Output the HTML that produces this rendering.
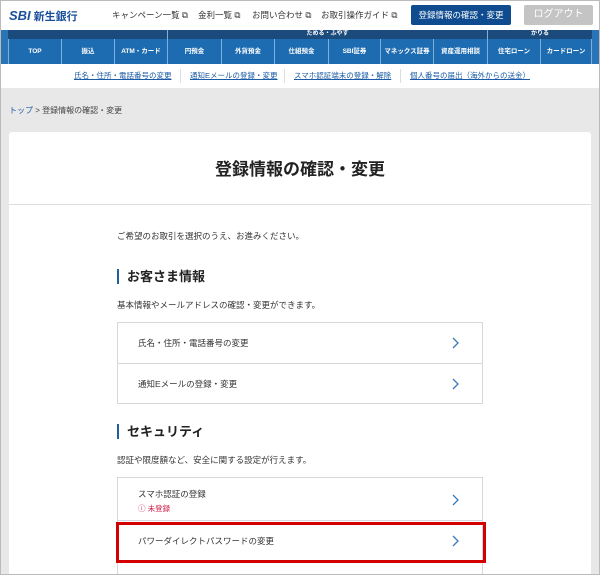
<!DOCTYPE html>
<html style="width:600px;height:575px;overflow:hidden"><head><meta charset="utf-8"><style>
*{margin:0;padding:0;box-sizing:border-box}
body{width:600px;height:575px;overflow:hidden;background:#e8e8e8;font-family:"Liberation Sans","Noto Sans CJK JP",sans-serif;color:#333;position:relative}
.frame{position:absolute;left:0;top:0;width:600px;height:575px;border:1px solid #bbb;pointer-events:none;z-index:9}
.hdr{position:absolute;left:0;top:0;width:600px;height:30px;background:#fff}
.logo{position:absolute;left:9px;top:8px;font-size:13px;font-weight:bold;color:#1a4f9c;font-style:italic}
.logo span{font-style:normal;font-size:11px;color:#1a4f9c;margin-left:3px}
.tl{position:absolute;top:9px;font-size:8.5px;color:#333}
.btn1{position:absolute;left:411px;top:5px;width:100px;height:20px;background:#0f4c8f;color:#fff;font-size:8.5px;text-align:center;line-height:20px;border-radius:2px;white-space:nowrap}
.btn2{position:absolute;left:524px;top:5px;width:69px;height:20px;background:#c4c4c4;color:#fff;font-size:10px;text-align:center;line-height:20px;border-radius:2px}
.nav{position:absolute;left:0;top:30px;width:600px;height:34px;background:#2a75b6}
.sub{position:absolute;top:30px;height:9px;background:#1b4a7c;color:#fff;font-size:6px;font-weight:bold;text-align:center;line-height:9px}
.ni{position:absolute;top:39px;height:25px;border-left:1px solid #7fb0d9;color:#fff;font-size:6.5px;font-weight:bold;text-align:center;line-height:25px;background:#1d6bb0}
.links{position:absolute;left:0;top:64px;width:600px;height:24px;background:#fff}
.lk{position:absolute;top:6px;font-size:7.5px;color:#1a5aa6;text-decoration:underline}
.sep{position:absolute;top:5px;width:1px;height:14px;background:#ddd}
.bc{position:absolute;left:9px;top:105px;font-size:8px;color:#444}
.card{position:absolute;left:9px;top:132px;width:582px;height:443px;background:#fff;border-radius:3px 3px 0 0;overflow:hidden}
.title{position:absolute;left:0;width:582px;top:23px;text-align:center;font-size:17px;font-weight:bold;color:#222}
.hr{position:absolute;left:0;top:72px;width:582px;height:1px;background:#ddd}
.t{position:absolute;left:108px;font-size:8.5px;color:#333}
.h{position:absolute;left:108px;font-size:13px;font-weight:bold;color:#222;padding-left:8px;border-left:2px solid #1f5fa0;line-height:15px}
.box{position:absolute;left:108px;width:366px;border:1px solid #d4d8dc}
.row{position:relative;height:40px;border-top:1px solid #d4d8dc;font-size:8.5px;color:#333;padding-left:20px;line-height:40px}
.row:first-child{border-top:none}
.chev{position:absolute;right:22px;top:14px;width:9px;height:12px}
.red{position:absolute;left:116px;top:522px;width:370px;height:41px;border:3px solid #d40000}
</style></head><body>
<div class="hdr">
<div class="logo">SBI<span>新生銀行</span></div>
<div class="tl" style="left:112px">キャンペーン一覧 ⧉</div>
<div class="tl" style="left:198px">金利一覧 ⧉</div>
<div class="tl" style="left:252px">お問い合わせ ⧉</div>
<div class="tl" style="left:321px">お取引操作ガイド ⧉</div>
<div class="btn1">登録情報の確認・変更</div>
<div class="btn2">ログアウト</div>
</div>
<div class="nav"></div>
<div class="sub" style="left:8px;width:159px"></div>
<div class="sub" style="left:167px;width:320px;border-left:1px solid #7fb0d9">ためる・ふやす</div>
<div class="sub" style="left:487px;width:105px;border-left:1px solid #7fb0d9">かりる</div>
<div class="ni" style="left:8px;width:53px">TOP</div>
<div class="ni" style="left:61px;width:53px">振込</div>
<div class="ni" style="left:114px;width:53px">ATM・カード</div>
<div class="ni" style="left:167px;width:54px">円預金</div>
<div class="ni" style="left:221px;width:53px">外貨預金</div>
<div class="ni" style="left:274px;width:54px">仕組預金</div>
<div class="ni" style="left:328px;width:52px">SBI証券</div>
<div class="ni" style="left:380px;width:53px">マネックス証券</div>
<div class="ni" style="left:433px;width:54px">資産運用相談</div>
<div class="ni" style="left:487px;width:53px">住宅ローン</div>
<div class="ni" style="left:540px;width:52px;border-right:1px solid #7fb0d9">カードローン</div>
<div class="links">
<div class="lk" style="left:74px">氏名・住所・電話番号の変更</div>
<div class="sep" style="left:180px"></div>
<div class="lk" style="left:190px">通知Eメールの登録・変更</div>
<div class="sep" style="left:284px"></div>
<div class="lk" style="left:294px">スマホ認証端末の登録・解除</div>
<div class="sep" style="left:400px"></div>
<div class="lk" style="left:410px">個人番号の届出（海外からの送金）</div>
</div>
<div class="bc"><span style="color:#1a5aa6">トップ</span> &gt; 登録情報の確認・変更</div>
<div class="card">
<div class="title">登録情報の確認・変更</div>
<div class="hr"></div>
<div class="t" style="top:98px">ご希望のお取引を選択のうえ、お進みください。</div>
<div class="h" style="top:137px">お客さま情報</div>
<div class="t" style="top:167px">基本情報やメールアドレスの確認・変更ができます。</div>
<div class="box" style="top:190px">
<div class="row">氏名・住所・電話番号の変更<svg class="chev" viewBox="0 0 9 12"><path d="M2 1l5 5-5 5" fill="none" stroke="#3a7ab8" stroke-width="1.3"/></svg></div>
<div class="row">通知Eメールの登録・変更<svg class="chev" viewBox="0 0 9 12"><path d="M2 1l5 5-5 5" fill="none" stroke="#3a7ab8" stroke-width="1.3"/></svg></div>
</div>
<div class="h" style="top:292px">セキュリティ</div>
<div class="t" style="top:322px">認証や限度額など、安全に関する設定が行えます。</div>
<div class="box" style="top:345px">
<div class="row" style="height:42px;line-height:normal;padding-top:10px">スマホ認証の登録<div style="font-size:7.5px;color:#d0204a;margin-top:3px">ⓘ 未登録</div><svg class="chev" viewBox="0 0 9 12" style="top:16px"><path d="M2 1l5 5-5 5" fill="none" stroke="#3a7ab8" stroke-width="1.3"/></svg></div>
<div class="row">パワーダイレクトパスワードの変更<svg class="chev" viewBox="0 0 9 12"><path d="M2 1l5 5-5 5" fill="none" stroke="#3a7ab8" stroke-width="1.3"/></svg></div>
<div class="row"></div>
</div>
</div>
<div class="red"></div>
<div class="frame"></div>
</body></html>
